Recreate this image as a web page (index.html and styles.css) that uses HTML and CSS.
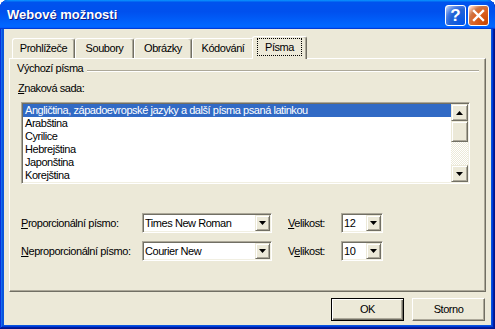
FILE: index.html
```html
<!DOCTYPE html>
<html>
<head>
<meta charset="utf-8">
<link rel="stylesheet" href="styles.css">
</head>
<body>
<div class="window">
  <div class="titlebar">
    <span class="title">Webové možnosti</span>
    <div class="tb-buttons">
      <div class="tb-btn help">?</div>
      <div class="tb-btn close">
        <svg width="21" height="21" viewBox="0 0 21 21"><path d="M6 6 L15 15 M15 6 L6 15" stroke="#fff" stroke-width="2.4" stroke-linecap="square" fill="none"/></svg>
      </div>
    </div>
  </div>
  <div class="body">
    <div class="tabs">
      <div class="tab t1">Prohlížeče</div>
      <div class="tab t2">Soubory</div>
      <div class="tab t3">Obrázky</div>
      <div class="tab t4">Kódování</div>
      <div class="tab active"><span class="focus">Písma</span></div>
    </div>
    <div class="panel">
      <div class="group-head"><span class="group-title">Výchozí písma</span><div class="etch"></div></div>
      <div class="field-label"><u>Z</u>naková sada:</div>
      <div class="listbox">
        <div class="items">
          <div class="item sel">Angličtina, západoevropské jazyky a další písma psaná latinkou</div>
          <div class="item">Arabština</div>
          <div class="item">Cyrilice</div>
          <div class="item">Hebrejština</div>
          <div class="item">Japonština</div>
          <div class="item">Korejština</div>
        </div>
        <div class="vscroll">
          <div class="raised sb-btn"><svg width="7" height="4" viewBox="0 0 7 4"><path d="M3.5 0 L7 4 L0 4 Z" fill="#000"/></svg></div>
          <div class="raised sb-thumb"></div>
          <div class="sb-track"></div>
          <div class="raised sb-btn"><svg width="7" height="4" viewBox="0 0 7 4"><path d="M0 0 L7 0 L3.5 4 Z" fill="#000"/></svg></div>
        </div>
      </div>
      <div class="font-rows">
        <div class="font-row">
          <span class="lbl-main"><u>P</u>roporcionální písmo:</span>
          <div class="combo wide"><span class="combo-text">Times New Roman</span><div class="raised combo-btn"><svg width="7" height="4" viewBox="0 0 7 4"><path d="M0 0 L7 0 L3.5 4 Z" fill="#000"/></svg></div></div>
          <span class="lbl-size"><u>V</u>elikost:</span>
          <div class="combo narrow"><span class="combo-text">12</span><div class="raised combo-btn"><svg width="7" height="4" viewBox="0 0 7 4"><path d="M0 0 L7 0 L3.5 4 Z" fill="#000"/></svg></div></div>
        </div>
        <div class="font-row">
          <span class="lbl-main"><u>N</u>eproporcionální písmo:</span>
          <div class="combo wide"><span class="combo-text">Courier New</span><div class="raised combo-btn"><svg width="7" height="4" viewBox="0 0 7 4"><path d="M0 0 L7 0 L3.5 4 Z" fill="#000"/></svg></div></div>
          <span class="lbl-size">V<u>e</u>likost:</span>
          <div class="combo narrow"><span class="combo-text">10</span><div class="raised combo-btn"><svg width="7" height="4" viewBox="0 0 7 4"><path d="M0 0 L7 0 L3.5 4 Z" fill="#000"/></svg></div></div>
        </div>
      </div>
    </div>
    <div class="footer">
      <div class="btn default"><span>OK</span></div>
      <div class="btn"><span>Storno</span></div>
    </div>
  </div>
</div>
</body>
</html>
```
FILE: styles.css
```css
* { box-sizing: border-box; }
html, body { margin: 0; padding: 0; }
body {
  width: 495px;
  height: 329px;
  overflow: hidden;
  font-family: "Liberation Sans", Arial, sans-serif;
  font-size: 11px;
  letter-spacing: -0.45px;
  color: #000;
  background: #fff;
}
u { text-decoration: underline; text-underline-offset: 1px; }

.window {
  width: 495px;
  height: 329px;
  display: flex;
  flex-direction: column;
  background: #0855dd;
  border-radius: 8px 8px 0 0;
  box-shadow: inset -1px -1px #00138c, inset 1px 1px #0831d9,
              inset -2px -2px #001ea0, inset 2px 2px #166aee,
              inset -3px -3px #003bda, inset 3px 3px #0855dd;
}

.titlebar {
  height: 29px;
  flex: none;
  display: flex;
  align-items: flex-start;
  justify-content: space-between;
  padding: 0 6px 0 7px;
  border-radius: 8px 8px 0 0;
  background: linear-gradient(180deg, #0997ff, #0053ee 8%, #0050ee 40%, #0066ff 88%, #0066ff 93%, #005bff 95%, #003dd7 96%, #003dd7);
}
.title {
  margin-top: 7px;
  color: #fff;
  font-weight: bold;
  font-size: 13px;
  line-height: 16px;
  letter-spacing: 0;
  text-shadow: 1px 1px #0a1883;
}
.tb-buttons {
  display: flex;
  gap: 2px;
  margin-top: 5px;
}
.tb-btn {
  width: 21px;
  height: 21px;
  border: 1px solid #fff;
  border-radius: 3px;
  display: flex;
  align-items: center;
  justify-content: center;
}
.tb-btn svg { margin: -1px; }
.help {
  background: radial-gradient(circle at 90% 90%, #0054e9 0, #2263d5 55%, #4479e4 70%, #a3bbec 90%, #fff 100%);
  color: #fff;
  font-weight: bold;
  font-size: 17px;
  line-height: 19px;
  letter-spacing: 0;
}
.close {
  background: radial-gradient(circle at 90% 90%, #cc4600 0, #dc6527 55%, #cd7546 70%, #ffccb2 90%, #fff 100%);
}

.body {
  flex: 1;
  margin: 0 4px 4px;
  background: #ece9d8;
  padding: 7px 5px 0 5px;
  display: flex;
  flex-direction: column;
}

.tabs {
  display: flex;
  align-items: flex-end;
  height: 22px;
  padding-left: 3px;
}
.tab {
  height: 20px;
  display: flex;
  justify-content: center;
  align-items: flex-start;
  padding-top: 3px;
  line-height: 13px;
  background: #ece9d8;
  border-left: 1px solid #fff;
  border-top: 1px solid #fff;
  border-right: 1px solid #716f64;
  border-radius: 3px 3px 0 0;
  box-shadow: inset -1px 0 #aca899;
}
.t1 { width: 63px; }
.t2 { width: 59px; }
.t3 { width: 58px; }
.t4 { width: 62px; }
.tab.active {
  width: 55px;
  height: 23px;
  margin: 0 -2px -1px -2px;
  padding-top: 1px;
  z-index: 1;
}
.focus {
  border: 1px dotted #000;
  padding: 2px 7px 1px 7px;
  line-height: 13px;
}

.panel {
  width: 477px;
  height: 234px;
  border-left: 1px solid #fff;
  border-top: 1px solid #fff;
  border-right: 1px solid #716f64;
  border-bottom: 1px solid #716f64;
  box-shadow: inset -1px -1px #aca899;
  padding: 0 6px 0 7px;
  display: flex;
  flex-direction: column;
}

.group-head {
  margin-top: 3px;
  display: flex;
  align-items: flex-start;
  line-height: 13px;
}
.etch {
  flex: 1;
  margin: 8px 0 0 4px;
  height: 2px;
  border-top: 1px solid #aca899;
  border-bottom: 1px solid #fff;
}

.field-label {
  margin: 7px 0 0 1px;
  line-height: 13px;
}

.listbox {
  margin: 7px 9px 0 4px;
  height: 82px;
  display: flex;
  background: #fff;
  border: 1px solid;
  border-color: #aca899 #fff #fff #aca899;
  box-shadow: inset 1px 1px #716f64, inset -1px -1px #f1efe2;
  padding: 1px;
}
.items {
  flex: 1;
  overflow: hidden;
}
.item {
  height: 13px;
  line-height: 13px;
  padding-left: 2px;
  white-space: nowrap;
}
.item.sel {
  background: #316ac5;
  color: #fff;
}

.raised {
  background: #ece9d8;
  border: 1px solid;
  border-color: #ece9d8 #716f64 #716f64 #ece9d8;
  box-shadow: inset 1px 1px #fff, inset -1px -1px #aca899;
  display: flex;
  align-items: center;
  justify-content: center;
}
.vscroll {
  width: 17px;
  display: flex;
  flex-direction: column;
}
.sb-btn { height: 17px; flex: none; }
.sb-thumb { height: 21px; flex: none; }
.sb-track {
  flex: 1;
  background: repeating-conic-gradient(#fff 0 25%, #ece9d8 0 50%) 0 0 / 2px 2px;
}

.font-rows {
  margin: 29px 0 0 4px;
  display: flex;
  flex-direction: column;
  gap: 8px;
}
.font-row {
  display: flex;
  align-items: center;
  height: 20px;
}
.lbl-main { width: 121px; }
.lbl-size { width: 53px; margin-left: 16px; }
.combo {
  height: 20px;
  display: flex;
  background: #fff;
  border: 1px solid;
  border-color: #aca899 #fff #fff #aca899;
  box-shadow: inset 1px 1px #716f64, inset -1px -1px #f1efe2;
  padding: 1px;
}
.combo.wide { width: 130px; }
.combo.narrow { width: 42px; }
.combo-text {
  flex: 1;
  padding-left: 1px;
  line-height: 16px;
  white-space: nowrap;
  overflow: hidden;
}
.combo-btn {
  width: 15px;
  height: 16px;
  flex: none;
}

.footer {
  margin-top: 6px;
  display: flex;
  justify-content: flex-end;
  gap: 8px;
  padding-right: 1px;
}
.btn {
  width: 73px;
  height: 23px;
  display: flex;
  align-items: center;
  justify-content: center;
  background: #ece9d8;
  border: 1px solid;
  border-color: #fff #716f64 #716f64 #fff;
  box-shadow: inset -1px -1px #aca899;
  line-height: 13px;
}
.btn.default {
  border: 1px solid #000;
  box-shadow: inset 1px 1px #fff, inset -1px -1px #716f64, inset -2px -2px #aca899;
}
```
